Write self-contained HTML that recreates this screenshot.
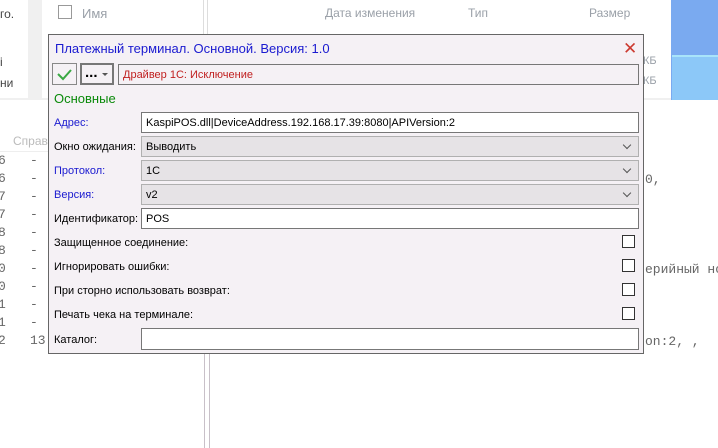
<!DOCTYPE html>
<html><head><meta charset="utf-8"><style>
*{margin:0;padding:0;box-sizing:border-box}
body{width:718px;height:448px;overflow:hidden;background:#fff;position:relative;font-family:"Liberation Sans","DejaVu Sans",sans-serif;font-size:11px;color:#000}
.a{position:absolute;white-space:nowrap}
.g{color:#9aa0a8;font-size:12px}
.m{font-family:"Liberation Mono",monospace;font-size:13px;color:#666}
.lbl{position:absolute;left:54px;font-size:11px;white-space:nowrap}
.blue{color:#1a1ad0}
.f{position:absolute;left:141px;width:498px;height:21px;border:1px solid #777;background:#fff;padding:4px 4px;font-size:11px;white-space:nowrap}
.d{position:absolute;left:141px;width:498px;height:21px;border:1px solid #b0b0b0;background:#e6e3e6;padding:4px 4px;font-size:11px}
.d:after{content:"";position:absolute;right:8px;top:5px;width:5px;height:5px;border-right:1px solid #555;border-bottom:1px solid #555;transform:rotate(45deg)}
.cb{position:absolute;left:622px;width:13px;height:13px;border:1px solid #333;background:#fff}
</style></head><body>
<div class="a" style="left:0;top:0;width:718px;height:100px;background:#fff"></div>
<div class="a" style="left:28px;top:0;width:14px;height:100px;background:#f0f0f0"></div>
<div class="a" style="left:0;top:98px;width:671px;height:2px;background:#f0f0f0"></div>
<div class="a" style="left:0;top:7px;font-size:12px;color:#444">го.</div>
<div class="a" style="left:0;top:55px;font-size:12px;color:#444">і</div>
<div class="a" style="left:0;top:76px;font-size:12px;color:#444">ни</div>
<div class="a" style="left:58px;top:5px;width:14px;height:14px;border:1px solid #999"></div>
<div class="a g" style="left:82px;top:6px;font-size:13px">Имя</div>
<div class="a" style="left:203px;top:0;width:1px;height:100px;background:#ddd"></div>
<div class="a" style="left:207px;top:0;width:1px;height:100px;background:#ddd"></div>
<div class="a g" style="left:325px;top:6px">Дата изменения</div>
<div class="a g" style="left:468px;top:6px">Тип</div>
<div class="a g" style="left:589px;top:6px">Размер</div>
<div class="a" style="left:671px;top:0;width:47px;height:100px;background:#7aaaf0"></div>
<div class="a" style="left:672px;top:55px;width:46px;height:45px;background:#8cc8f8;border-top:2px solid #a8e4fa"></div>
<div class="a g" style="left:643px;top:55px;font-size:11px">КБ</div>
<div class="a g" style="left:643px;top:75px;font-size:11px">КБ</div>
<div class="a g" style="left:13px;top:134px;font-size:12px;color:#bbb">Справ</div>
<div class="a" style="left:0;top:151px;width:48px;height:1px;background:#eee"></div>
<div class="a m" style="left:-2px;top:152px;line-height:18px">6<br>6<br>7<br>7<br>8<br>8<br>0<br>0<br>1<br>1<br>2</div>
<div class="a m" style="left:30px;top:152px;line-height:18px">-<br>-<br>-<br>-<br>-<br>-<br>-<br>-<br>-<br>-<br>13</div>
<div class="a m" style="left:645px;top:172px">0,</div>
<div class="a m" style="left:645px;top:262px">ерийный но</div>
<div class="a m" style="left:645px;top:334px">on:2, ,</div>
<div class="a" style="left:204px;top:353px;width:1px;height:95px;background:#c8c0c8"></div>
<div class="a" style="left:209px;top:353px;width:1px;height:95px;background:#c8c0c8"></div>
<div class="a" style="left:48px;top:34px;width:596px;height:320px;background:#f5f1f5;border:1px solid #666"></div>
<div class="a" style="left:55px;top:41px;font-size:13px;color:#1a1ad0">Платежный терминал. Основной. Версия: 1.0</div>
<div class="a" style="left:623px;top:39px;color:#cc3a30;font-size:17px;font-weight:bold;line-height:20px">✕</div>
<div class="a" style="left:52px;top:63px;width:25px;height:22px;border:1px solid #888;background:#f5f1f5">
<svg width="23" height="20" style="position:absolute;left:0;top:0"><path d="M5 10 L10 15 L18 6" stroke="#3aa843" stroke-width="2" fill="none"/></svg></div>
<div class="a" style="left:80px;top:63px;width:34px;height:22px;border:2px solid #777;background:#f5f1f5;font-weight:bold;font-size:15px;padding-left:3px;line-height:16px">...<span style="position:absolute;right:4px;top:8px;width:0;height:0;border-left:3px solid transparent;border-right:3px solid transparent;border-top:3px solid #555"></span></div>
<div class="a" style="left:118px;top:64px;width:521px;height:21px;border:1px solid #777;background:#f5f1f5;color:#c02020;padding:4px 4px;font-size:11px">Драйвер 1С: Исключение</div>
<div class="a" style="left:54px;top:91px;font-size:13px;color:#0a8a0a">Основные</div>
<div class="lbl blue" style="top:117px">Адрес:</div>
<div class="f" style="top:112px">KaspiPOS.dll|DeviceAddress.192.168.17.39:8080|APIVersion:2</div>
<div class="lbl" style="top:141px">Окно ожидания:</div>
<div class="d" style="top:136px">Выводить</div>
<div class="lbl blue" style="top:165px">Протокол:</div>
<div class="d" style="top:160px">1C</div>
<div class="lbl blue" style="top:189px">Версия:</div>
<div class="d" style="top:184px">v2</div>
<div class="lbl" style="top:213px">Идентификатор:</div>
<div class="f" style="top:208px">POS</div>
<div class="lbl" style="top:237px">Защищенное соединение:</div>
<div class="cb" style="top:235px"></div>
<div class="lbl" style="top:261px">Игнорировать ошибки:</div>
<div class="cb" style="top:259px"></div>
<div class="lbl" style="top:285px">При сторно использовать возврат:</div>
<div class="cb" style="top:283px"></div>
<div class="lbl" style="top:309px">Печать чека на терминале:</div>
<div class="cb" style="top:307px"></div>
<div class="lbl" style="top:334px">Каталог:</div>
<div class="f" style="top:328px;height:22px"></div>
</body></html>
